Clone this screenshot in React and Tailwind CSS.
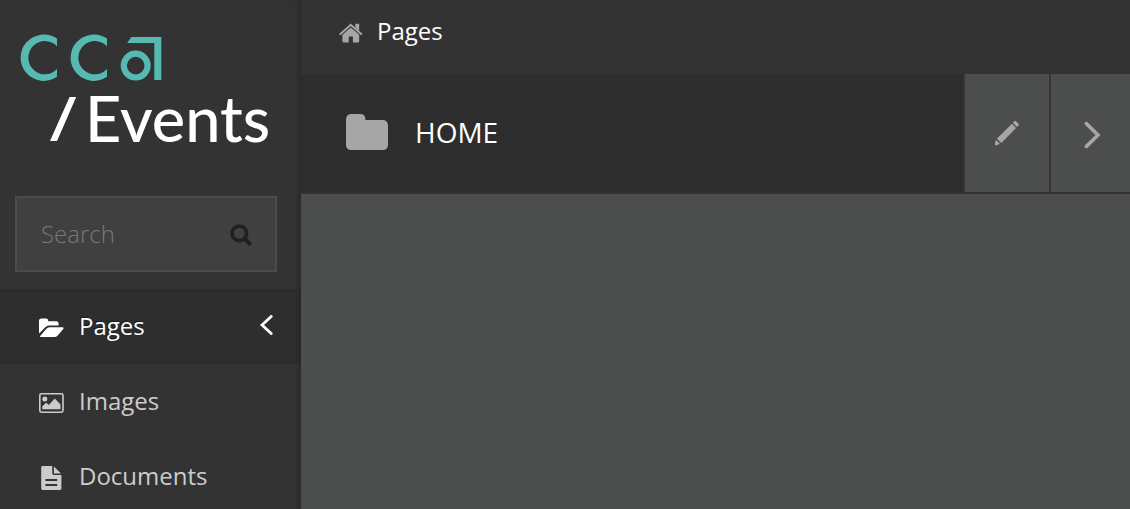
function CcaMark() {
  return (
    <svg className="block h-[47px] w-[142px]" viewBox="0 0 142 47" fill="#56bab3" role="img" aria-label="CCA">
      <path d="M37 4.6A23.2 23.2 0 1 0 37 42.8V35.1A16.6 16.6 0 1 1 37 12.3Z" />
      <path d="M87 4.6A23.2 23.2 0 1 0 87 42.8V35.1A16.6 16.6 0 1 1 87 12.3Z" />
      <circle cx="115.7" cy="31.6" r="11.9" fill="none" stroke="#56bab3" strokeWidth="6.2" />
      <path d="M111.3 3H141.3V46H134.3V9H107.2Z" />
    </svg>
  );
}

function Logo() {
  return (
    <a href="#" className="block h-[162px] pl-5 pt-[34px] text-white">
      <CcaMark />
      <span className="mt-[15px] flex items-start pl-[30px]">
        <svg className="mt-px h-[44px] w-[27px]" viewBox="0 0 27 44" fill="currentColor" aria-hidden="true">
          <path d="M19.6 0H26.2L7 44H0Z" />
        </svg>
        <span className="ml-2 font-['Lato',sans-serif] text-[63px] leading-[44px] font-medium">Events</span>
      </span>
    </a>
  );
}

function SearchIcon() {
  return (
    <svg className="h-[22px] w-[22px]" viewBox="0 0 22 22" fill="none" stroke="#202020" aria-hidden="true">
      <circle cx="9.3" cy="9.3" r="7.3" strokeWidth="3.6" />
      <path d="M14.5 14.5L19.6 19.6" strokeWidth="4" strokeLinecap="round" />
    </svg>
  );
}

function FolderOpenIcon() {
  return (
    <svg className="h-[20px] w-[25px]" viewBox="0 0 25 20" fill="currentColor" aria-hidden="true">
      <path d="M0 15.5V2.8Q0 .5 2.3 .5H7Q9.2 .5 9.2 2.8V3.3H17.2Q19.6 3.3 19.6 5.6V7.6H10Q7.8 7.6 6.3 9.2Z" />
      <path d="M1.2 18.9Q.9 18.5 1.4 17.8L7.2 10.9Q8.6 9.3 10.6 9.3H23.6Q25.2 9.5 24.2 10.9L18.7 17.4Q17.4 19 15.4 19H1.6Z" />
    </svg>
  );
}

function ImageIcon() {
  return (
    <svg className="h-[20px] w-[25px]" viewBox="0 0 25 20" fill="currentColor" aria-hidden="true">
      <rect x=".8" y=".8" width="23.2" height="18.4" rx="1.6" fill="none" stroke="currentColor" strokeWidth="1.6" />
      <circle cx="5.8" cy="6" r="2.5" />
      <path d="M3.3 16.3V13.2L7.2 9.7L9.8 12.1L15.8 5.6L21.5 11.5V16.3Z" />
    </svg>
  );
}

function DocumentIcon() {
  return (
    <svg className="h-[24px] w-[25px]" viewBox="0 0 25 24" fill="currentColor" aria-hidden="true">
      <path
        fillRule="evenodd"
        d="M3.6 0H13.2V7.2Q13.2 8.9 14.9 8.9H22.4V22.6Q22.4 24 21 24H3.6Q2.2 24 2.2 22.6V1.4Q2.2 0 3.6 0ZM6.4 13V15H18.2V13ZM6.4 17.9V19.9H18.2V17.9Z"
      />
      <path d="M14.9 .4L22 7.4H14.9Z" />
    </svg>
  );
}

function HomeIcon() {
  return (
    <svg className="h-[20px] w-[24px]" viewBox="0 0 24 20" fill="currentColor" aria-hidden="true">
      <path d="M1.4 11L11.8 1.8L22.2 11" fill="none" stroke="currentColor" strokeWidth="2" strokeLinecap="round" />
      <path d="M16.3 .7H20.2V8L16.3 4.6Z" />
      <path d="M11.8 4.4L20.2 11.8V18.3Q20.2 19.4 19.1 19.4H13.9V13.4H9.8V19.4H4.5Q3.4 19.4 3.4 18.3V11.8Z" />
    </svg>
  );
}

function FolderIcon() {
  return (
    <svg className="h-[36px] w-[42px]" viewBox="0 0 42 36" fill="currentColor" aria-hidden="true">
      <path d="M0 5.6Q0 0 5.6 0H14Q19.4 0 19.4 5.4V6H36.4Q42 6 42 11.6V30.4Q42 36 36.4 36H5.6Q0 36 0 30.4Z" />
    </svg>
  );
}

function PencilIcon() {
  return (
    <svg className="h-[26px] w-[24px]" viewBox="0 0 24 26" fill="currentColor" aria-hidden="true">
      <path d="M17 3.8L21 8L6.4 23.1L1.8 18.7Z" />
      <path d="M17.9 2.8L19.7 .9Q20.2 .5 20.8 1L23.8 4.1Q24.2 4.7 23.7 5.2L21.9 7Z" />
      <path d="M1.2 20.3L5.1 24.1L0 25.5V22.1Z" />
    </svg>
  );
}

const navItems = [
  { label: "Pages", Icon: FolderOpenIcon, active: true },
  { label: "Images", Icon: ImageIcon },
  { label: "Documents", Icon: DocumentIcon },
];

function Sidebar() {
  return (
    <aside className="w-[301px] shrink-0 bg-[#333333] shadow-[inset_-6px_0_6px_-4px_#292929]">
      <Logo />
      <form className="mt-[34px] mr-6 ml-[15px] flex h-[76px] items-center border-2 border-[#4c4c4c] bg-[#404040] pr-[23px] pl-6">
        <input
          type="text"
          aria-label="Search"
          placeholder="Search"
          className="h-full min-w-0 flex-1 bg-transparent pb-0.5 text-2xl leading-[36px] font-light text-white outline-none placeholder:text-[#787878]"
        />
        <button type="submit" aria-label="Search" className="pt-0.5">
          <SearchIcon />
        </button>
      </form>
      <nav className="mt-[17px]">
        <ul>
          {navItems.map(({ label, Icon, active }) => (
            <li key={label}>
              <a
                href="#"
                className={
                  active
                    ? "flex h-[75px] items-center gap-[15px] bg-[#2e2e2e] pr-7 pl-[39px] text-2xl font-medium text-white shadow-[inset_-6px_0_6px_-4px_#262626] [text-shadow:-1px_-1px_0_#1c1c1c]"
                    : "flex h-[75px] items-center gap-[15px] pr-7 pl-[39px] text-2xl font-medium text-[#cccccc]"
                }
              >
                <span className="pt-[3px]">
                  <Icon />
                </span>
                <span className="flex-1 pb-0.5">{label}</span>
                {active && (
                  <svg className="mb-[3px] h-[20px] w-[13px]" viewBox="0 0 13 20" fill="none" stroke="currentColor" strokeWidth="2.8" strokeLinecap="round" aria-hidden="true">
                    <path d="M11.2 1.4L2 10L11.2 18.6" />
                  </svg>
                )}
              </a>
            </li>
          ))}
        </ul>
      </nav>
    </aside>
  );
}

export default function App() {
  return (
    <div className="flex min-h-screen bg-[#4c4e4d] font-['Open_Sans',sans-serif]">
      <Sidebar />
      <main className="min-w-0 flex-1">
        <header className="flex h-[74px] items-start bg-[#333333] pt-[13px] pl-[38px]">
          <a href="#" className="flex items-center gap-[14px] text-2xl leading-[36px] text-white">
            <span className="pt-[3px] text-[#a6a6a6]">
              <HomeIcon />
            </span>
            Pages
          </a>
        </header>
        <section className="flex h-[120px] border-b-2 border-[#333333] bg-[#2d2d2d]">
          <a href="#" className="flex flex-1 items-center gap-[27px] pb-0.5 pl-[45px] text-[28px] text-white">
            <span className="text-[#a6a6a6]">
              <FolderIcon />
            </span>
            HOME
          </a>
          <button type="button" aria-label="Edit" className="flex w-[86px] items-center justify-center border-l-2 border-[#363636] bg-[#4c4e4d] text-[#a6a6a6]">
            <PencilIcon />
          </button>
          <button type="button" aria-label="Explore child pages" className="flex w-[81px] items-center justify-center border-l-2 border-[#363636] bg-[#4c4e4d] pt-1 pl-1 text-[#a6a6a6]">
            <svg className="h-[28px] w-[17px]" viewBox="0 0 17 28" fill="none" stroke="currentColor" strokeWidth="3.6" strokeLinecap="round" aria-hidden="true">
              <path d="M2.4 2.6L14 14L2.4 25.4" />
            </svg>
          </button>
        </section>
      </main>
    </div>
  );
}
